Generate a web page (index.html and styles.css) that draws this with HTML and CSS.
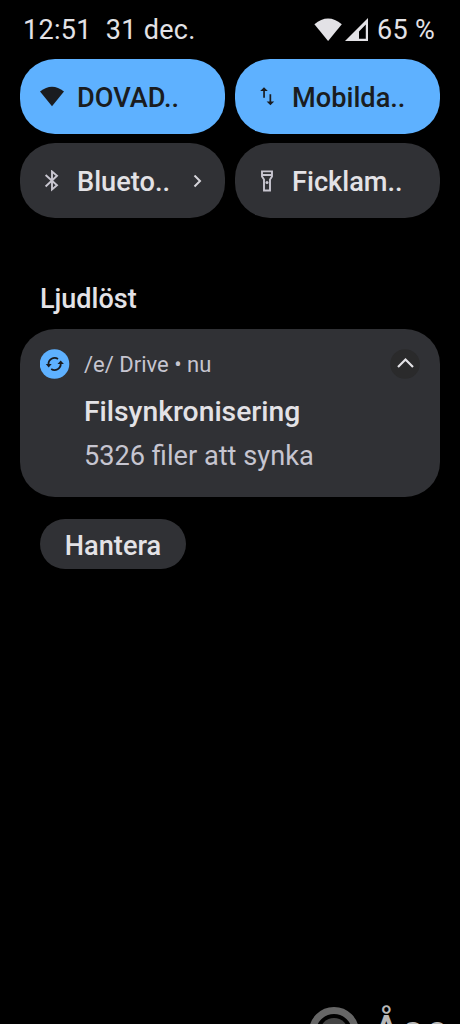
FILE: index.html
```html
<!DOCTYPE html>
<html lang="sv">
<head>
<meta charset="utf-8">
<title>Aviseringar</title>
<link rel="stylesheet" href="styles.css">
</head>
<body>
<main class="shade">
  <header class="status">
    <span class="clock">12:51</span>
    <span class="date">31 dec.</span>
    <svg class="status-icons" width="56" height="26" viewBox="0 0 56 26">
      <path d="M0.4 7.2Q14 -4.2 27.8 7.2L14.1 24Z"/>
      <path fill-rule="evenodd" d="M54 1V24H31ZM51.8 7.5L45 14.5V21.8H51.8Z"/>
    </svg>
    <span class="battery">65 %</span>
  </header>
  <section class="tiles">
    <div class="tile on">
      <svg class="tile-icon" width="24" height="24" viewBox="0 0 24 24"><path d="M0 5.5Q12 -4.2 24 5.5L12 20.3Z"/></svg>
      <span class="label">DOVAD..</span>
    </div>
    <div class="tile on">
      <svg class="tile-icon" width="24" height="24" viewBox="0 0 24 24"><path d="M9 1.3L5.2 5.1H8.2V11.8H9.9V5.1H12.8ZM14.5 8.3V15.5H11.6L15.4 19.3L19.2 15.5H16.2V8.3Z"/></svg>
      <span class="label">Mobilda..</span>
    </div>
    <div class="tile">
      <svg class="tile-icon line" width="24" height="24" viewBox="0 0 24 24"><path d="M5.6 5L17 15.2L12 19.5V1.5L17 5.8L5.6 16.5"/></svg>
      <span class="label">Blueto..</span>
      <svg class="chevron" width="10" height="14" viewBox="0 0 10 14"><path d="M1.5 0.5L7 6L1.5 11.5"/></svg>
    </div>
    <div class="tile">
      <svg class="tile-icon line" width="24" height="24" viewBox="0 0 24 24"><path d="M7 1.4H17V6.5L15 9.5V20.5H9V9.5L7 6.5ZM7 5H17"/><circle class="dot" cx="12" cy="12.5" r="1.5"/></svg>
      <span class="label">Ficklam..</span>
    </div>
  </section>
  <h1 class="section-title">Ljudlöst</h1>
  <article class="card">
    <svg class="app-icon" width="30" height="30" viewBox="0 0 30 30">
      <circle class="disc" cx="14.5" cy="15" r="14.8"/>
      <path class="arc" d="M8.5 15.5A6.2 6.2 0 0 1 18 9.9M20.7 14.5A6.2 6.2 0 0 1 11.2 20.1"/>
      <path d="M5.8 15H11.7L8.7 18.4ZM17.5 15H23.9L20.7 11.6Z"/>
    </svg>
    <div class="body">
      <p class="app">/e/ Drive • nu</p>
      <h2 class="title">Filsynkronisering</h2>
      <p class="text">5326 filer att synka</p>
    </div>
    <svg class="collapse" width="30" height="30" viewBox="0 0 30 30"><circle cx="15" cy="15" r="14.8"/><path d="M8 18L15.5 10.5L23 18"/></svg>
  </article>
  <button class="manage">Hantera</button>
  <footer class="carrier">
    <svg width="52" height="52" viewBox="0 0 52 52"><circle class="ring" cx="26" cy="26" r="21.5"/><circle class="core" cx="26" cy="26" r="14"/></svg>
    <span>Åse</span>
  </footer>
</main>
</body>
</html>
```
FILE: styles.css
```css
* { box-sizing: border-box; }
body { margin: 0; background: #000; font-family: Roboto, sans-serif; color: #e3e2e6; }
h1, h2, p { margin: 0; }
svg { display: block; flex: none; }
.shade { display: flex; flex-direction: column; width: 460px; height: 1024px; padding: 0 20px; overflow: hidden; }
.shade > * { flex: none; }
.status { display: flex; align-items: center; height: 59px; padding: 0 5px 0 3px; font-size: 27px; letter-spacing: 0.3px; white-space: pre; }
.date { margin-left: 14px; }
.status-icons { margin-left: auto; fill: #e3e2e6; }
.battery { margin-left: 7px; }
.tiles { display: grid; grid-template-columns: 1fr 1fr; grid-auto-rows: 74.5px; gap: 9.5px 10px; }
.tile { display: flex; align-items: center; padding: 4px 22px 0 20px; border-radius: 35px; background: #303135; font-size: 27.2px; font-weight: 500; }
.tile.on { background: #5eb1ff; color: #1a1c20; }
.tile-icon { margin-right: 13px; fill: currentColor; }
.line { fill: none; stroke: #c8c6d0; stroke-width: 1.9; }
.dot { fill: #c8c6d0; stroke: none; }
.chevron { margin-left: auto; fill: none; stroke: #d5d4da; stroke-width: 2; }
.section-title { margin: 66px 0 0 20px; font-size: 27px; line-height: 30px; font-weight: 500; }
.card { display: flex; height: 168px; margin-top: 15.5px; padding: 20px; border-radius: 35px; background: #303135; }
.disc { fill: #5eb1ff; }
.app-icon { fill: #1a1c20; }
.arc { fill: none; stroke: #1a1c20; stroke-width: 1.8; }
.body { margin-left: 14px; }
.app { color: #c6c5d0; font-size: 22px; line-height: 32px; }
.title { margin-top: 14px; font-size: 28.3px; line-height: 34px; font-weight: 500; }
.text { margin-top: 10px; color: #c6c5d0; font-size: 27.2px; line-height: 34px; }
.collapse { margin-left: auto; }
.collapse circle { fill: #2a2a2b; }
.collapse path { fill: none; stroke: #e3e2e6; stroke-width: 2.2; }
.manage { width: 146px; height: 50px; align-self: flex-start; margin-top: 22px; margin-left: 20px; padding: 4px 0 0; border: 0; border-radius: 25px; background: #303135; color: #e3e2e6; font: 500 27.2px Roboto, sans-serif; }
.carrier { display: flex; margin: 437px -20px 0 288px; color: #b8b8b8; font: 500 40px/40px Roboto, sans-serif; letter-spacing: 3px; }
.carrier span { margin-left: 13px; padding-top: 5px; }
.ring { fill: none; stroke: #666; stroke-width: 7; }
.core { fill: #444; }
```
